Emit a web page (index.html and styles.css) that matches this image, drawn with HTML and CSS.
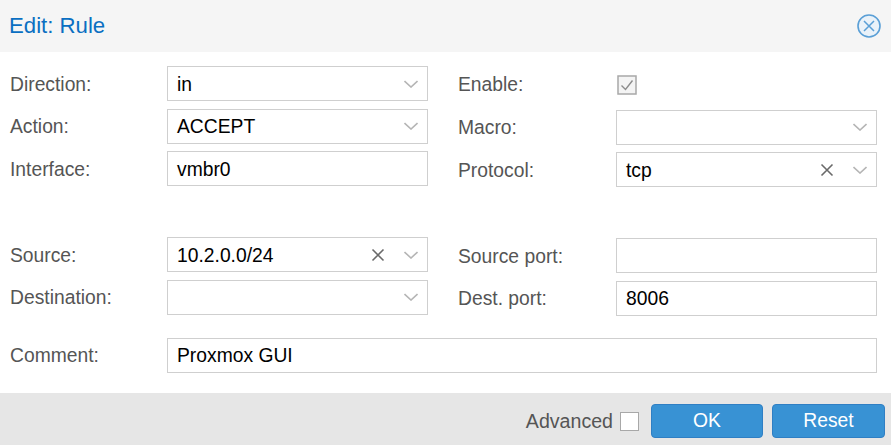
FILE: index.html
```html
<!DOCTYPE html>
<html lang="en">
<head>
<meta charset="utf-8">
<title>Edit: Rule</title>
<link rel="stylesheet" href="styles.css">
</head>
<body>
<svg class="defs" width="0" height="0" aria-hidden="true">
  <symbol id="chev" viewBox="0 0 14 8"><path d="M.5 1l6.5 6 6.5-6" fill="none" stroke="#b5b5b5" stroke-width="1.6"/></symbol>
  <symbol id="clear" viewBox="0 0 14 14"><path d="M1.5 1.5l11 11M12.5 1.5l-11 11" fill="none" stroke="#6a6a6a" stroke-width="1.6"/></symbol>
</svg>
<div class="dialog">
  <header class="titlebar">
    <h1 class="title">Edit: Rule</h1>
    <svg class="close" viewBox="0 0 24 24" width="24" height="24"><circle cx="12" cy="12" r="11" fill="#eaf2f9" stroke="#5a9fd6" stroke-width="1.6"/><path d="M7 7l10 10M17 7L7 17" fill="none" stroke="#5a9fd6" stroke-width="1.5"/></svg>
  </header>
  <main class="form">
    <section class="columns first">
      <div class="column">
        <div class="row"><span class="label">Direction:</span><div class="field"><span class="value">in</span><svg class="chev"><use href="#chev"/></svg></div></div>
        <div class="row"><span class="label">Action:</span><div class="field"><span class="value">ACCEPT</span><svg class="chev"><use href="#chev"/></svg></div></div>
        <div class="row"><span class="label">Interface:</span><div class="field"><span class="value">vmbr0</span></div></div>
      </div>
      <div class="column right">
        <div class="row"><span class="label enable">Enable:</span>
          <svg class="check" viewBox="0 0 20 20" width="20" height="20"><rect x="1" y="1" width="18" height="18" fill="#f4f4f4" stroke="#a8a8a8" stroke-width="1.5"/><path d="M4.5 10.5l4 4 7-9" fill="none" stroke="#8c8c8c" stroke-width="1.4"/></svg>
        </div>
        <div class="row"><span class="label">Macro:</span><div class="field"><span class="value"></span><svg class="chev"><use href="#chev"/></svg></div></div>
        <div class="row"><span class="label">Protocol:</span><div class="field"><span class="value">tcp</span><svg class="clear"><use href="#clear"/></svg><svg class="chev"><use href="#chev"/></svg></div></div>
      </div>
    </section>
    <section class="columns second">
      <div class="column">
        <div class="row"><span class="label">Source:</span><div class="field"><span class="value">10.2.0.0/24</span><svg class="clear"><use href="#clear"/></svg><svg class="chev"><use href="#chev"/></svg></div></div>
        <div class="row"><span class="label">Destination:</span><div class="field"><span class="value"></span><svg class="chev"><use href="#chev"/></svg></div></div>
      </div>
      <div class="column right">
        <div class="row"><span class="label">Source port:</span><div class="field"><span class="value"></span></div></div>
        <div class="row"><span class="label">Dest. port:</span><div class="field"><span class="value">8006</span></div></div>
      </div>
    </section>
    <div class="row comment"><span class="label">Comment:</span><div class="field"><span class="value">Proxmox GUI</span></div></div>
  </main>
  <footer class="footer">
    <span class="advanced">Advanced</span>
    <span class="box"></span>
    <button class="btn ok" type="button">OK</button>
    <button class="btn reset" type="button">Reset</button>
  </footer>
</div>
</body>
</html>
```
FILE: styles.css
```css
* { box-sizing: border-box; }
html, body { margin: 0; padding: 0; }
body { background: #fff; font-family: "Liberation Sans", Arial, sans-serif; font-size: 19.3px; color: #000; }
.defs { display: block; height: 0; }
.dialog { width: 891px; height: 445px; display: flex; flex-direction: column; overflow: hidden; }
.titlebar { height: 52px; flex: none; background: #f5f5f5; display: flex; align-items: center; justify-content: space-between; padding: 0 10px 0 9px; }
.title { margin: 0; font-size: 22.2px; font-weight: 400; color: #0a6fc2; }
.close { display: block; }
.form { flex: 1; padding: 14px 14px 0 10px; }
.columns { display: grid; grid-template-columns: 418px 419px; column-gap: 30px; }
.second { margin-top: 50px; }
.column { display: flex; flex-direction: column; row-gap: 7.6px; }
.right { padding-top: 1px; }
.row { display: flex; align-items: center; height: 35px; }
.label { flex: none; width: 157px; color: #555; padding-top: 2px; }
.right .label { width: 158px; }
.right .enable { padding-top: 0; }
.field { flex: 1; height: 35px; display: flex; align-items: center; border: 1px solid #cfcfcf; background: #fff; padding: 0 9px; }
.value { flex: 1; white-space: nowrap; padding-top: 2px; }
.chev { width: 14px; height: 8px; display: block; }
.clear { width: 14px; height: 14px; margin-right: 19px; display: block; }
.check { display: block; margin-left: 1px; }
.comment { margin-top: 22px; width: 867px; }
.footer { height: 52px; flex: none; background: #e6e6e6; display: flex; align-items: center; padding: 4px 6px 0 0; justify-content: flex-end; }
.advanced { color: #555; margin-right: 7px; font-size: 19.6px; }
.box { width: 19px; height: 19px; background: #fff; border: 1.5px solid #a8a8a8; margin-right: 12px; }
.btn { height: 34px; border: 1px solid #2f7fc4; border-radius: 4px; background: #3892d4; color: #fff; font: inherit; padding: 0; }
.ok { width: 112px; margin-right: 9px; }
.reset { width: 113px; }
```
